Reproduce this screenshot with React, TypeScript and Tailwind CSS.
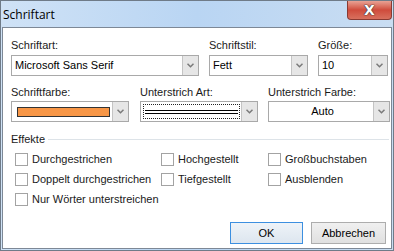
import React from "react";

const font = "font-['Liberation_Sans',Arial,sans-serif]";

function Chevron() {
  return (
    <svg width="7" height="5" viewBox="0 0 7 5" className="block">
      <path d="M0.5 0.8 L3.5 3.8 L6.5 0.8" fill="none" stroke="#7a7a7a" strokeWidth="1.5" />
    </svg>
  );
}

function Combo({
  width,
  children,
  center,
}: {
  width: number;
  children?: React.ReactNode;
  center?: boolean;
}) {
  return (
    <div
      className="flex h-[21px] border border-[#a9a9a9] bg-white"
      style={{ width }}
    >
      <div
        className={`flex flex-1 items-center pl-[3px] text-[11px] text-black ${
          center ? "justify-center" : ""
        }`}
      >
        {children}
      </div>
      <div className="flex w-[16px] items-center justify-center border-l border-[#c4c4c4] bg-[#e6e6e6]">
        <Chevron />
      </div>
    </div>
  );
}

function Check({ label, width }: { label: string; width?: number }) {
  return (
    <div className="flex h-[13px] items-center gap-[4px]" style={{ width }}>
      <div className="h-[13px] w-[13px] border border-[#a3a3a3] bg-white" />
      <span className="text-[11px] leading-[13px] text-[#1a1a1a]">{label}</span>
    </div>
  );
}

export default function App() {
  return (
    <div
      className={`relative flex h-[251px] w-[394px] flex-col overflow-hidden border border-[#6f7b88] bg-gradient-to-r from-[#cfe2f6] via-[#b9d5f3] to-[#c9ddf2] ${font}`}
    >
      {/* title bar */}
      <div className="flex h-[26px] shrink-0 items-center pl-[2px] pt-[1px]">
        <span className="font-['Open_Sans',sans-serif] text-[12px] text-black">Schriftart</span>
      </div>
      <div className="absolute right-[1px] top-0 flex h-[19px] w-[45px] items-center justify-center rounded-b-[4px] border border-t-0 border-[#8a3a32] bg-gradient-to-b from-[#e8a194] via-[#cf4b3c] to-[#d8705e]">
        <span className="font-['DejaVu_Sans',sans-serif] text-[14px] font-bold leading-none text-white [text-shadow:0_0_1px_#333,0_0_1px_#333,0_0_1px_#333]">
          X
        </span>
      </div>

      {/* content */}
      <div className="mx-[1px] mb-[1px] flex flex-1 flex-col border border-[#7d8896] bg-white pl-[8px] pt-[11px]">
        <div className="flex gap-[10px]">
          <div className="flex flex-col gap-[3px]">
            <span className="text-[11px] leading-[13px] text-[#1a1a1a]">Schriftart:</span>
            <Combo width={188}>Microsoft Sans Serif</Combo>
          </div>
          <div className="flex flex-col gap-[3px]">
            <span className="text-[11px] leading-[13px] text-[#1a1a1a]">Schriftstil:</span>
            <Combo width={99}>Fett</Combo>
          </div>
          <div className="flex flex-col gap-[3px]">
            <span className="text-[11px] leading-[13px] text-[#1a1a1a]">Größe:</span>
            <Combo width={70}>10</Combo>
          </div>
        </div>

        <div className="mt-[10px] flex gap-[11px]">
          <div className="flex flex-col gap-[2px]">
            <span className="text-[11px] leading-[13px] text-[#1a1a1a]">Schriftfarbe:</span>
            <Combo width={118}>
              <div className="ml-[2px] h-[10px] w-[93px] border border-[#333] bg-[#f79646]" />
            </Combo>
          </div>
          <div className="flex flex-col gap-[2px]">
            <span className="text-[11px] leading-[13px] text-[#1a1a1a]">Unterstrich Art:</span>
            <Combo width={118}>
              <div className="-ml-[1px] mr-[1px] flex h-[15px] flex-1 flex-col justify-center gap-[2px] border border-dotted border-[#222] px-[1px]">
                <div className="h-[1px] bg-black" />
                <div className="h-[1px] bg-black" />
              </div>
            </Combo>
          </div>
          <div className="ml-[-1px] flex flex-col gap-[2px]">
            <span className="text-[11px] leading-[13px] text-[#1a1a1a]">Unterstrich Farbe:</span>
            <Combo width={122} center>
              Auto
            </Combo>
          </div>
        </div>

        <div className="mt-[11px] flex items-center gap-[3px] pr-[2px]">
          <span className="text-[11px] leading-[13px] text-[#1a1a1a]">Effekte</span>
          <div className="h-[1px] flex-1 bg-[#dde3e8]" />
        </div>

        <div className="mt-[7px] flex flex-col gap-[7px] pl-[4px]">
          <div className="flex">
            <Check label="Durchgestrichen" width={146} />
            <Check label="Hochgestellt" width={107} />
            <Check label="Großbuchstaben" />
          </div>
          <div className="flex">
            <Check label="Doppelt durchgestrichen" width={146} />
            <Check label="Tiefgestellt" width={107} />
            <Check label="Ausblenden" />
          </div>
          <div className="flex">
            <Check label="Nur Wörter unterstreichen" />
          </div>
        </div>

        <div className="mt-auto mb-[4px] flex justify-end gap-[8px] pr-[5px]">
          <button className="h-[22px] w-[73px] border border-[#3c8fe0] bg-gradient-to-b from-[#eef3f8] to-[#dde6ef] text-[11px] text-black">
            OK
          </button>
          <button className="h-[22px] w-[75px] border border-[#adadad] bg-gradient-to-b from-[#f0f0f0] to-[#e0e0e0] text-[11px] text-black">
            Abbrechen
          </button>
        </div>
      </div>
    </div>
  );
}
